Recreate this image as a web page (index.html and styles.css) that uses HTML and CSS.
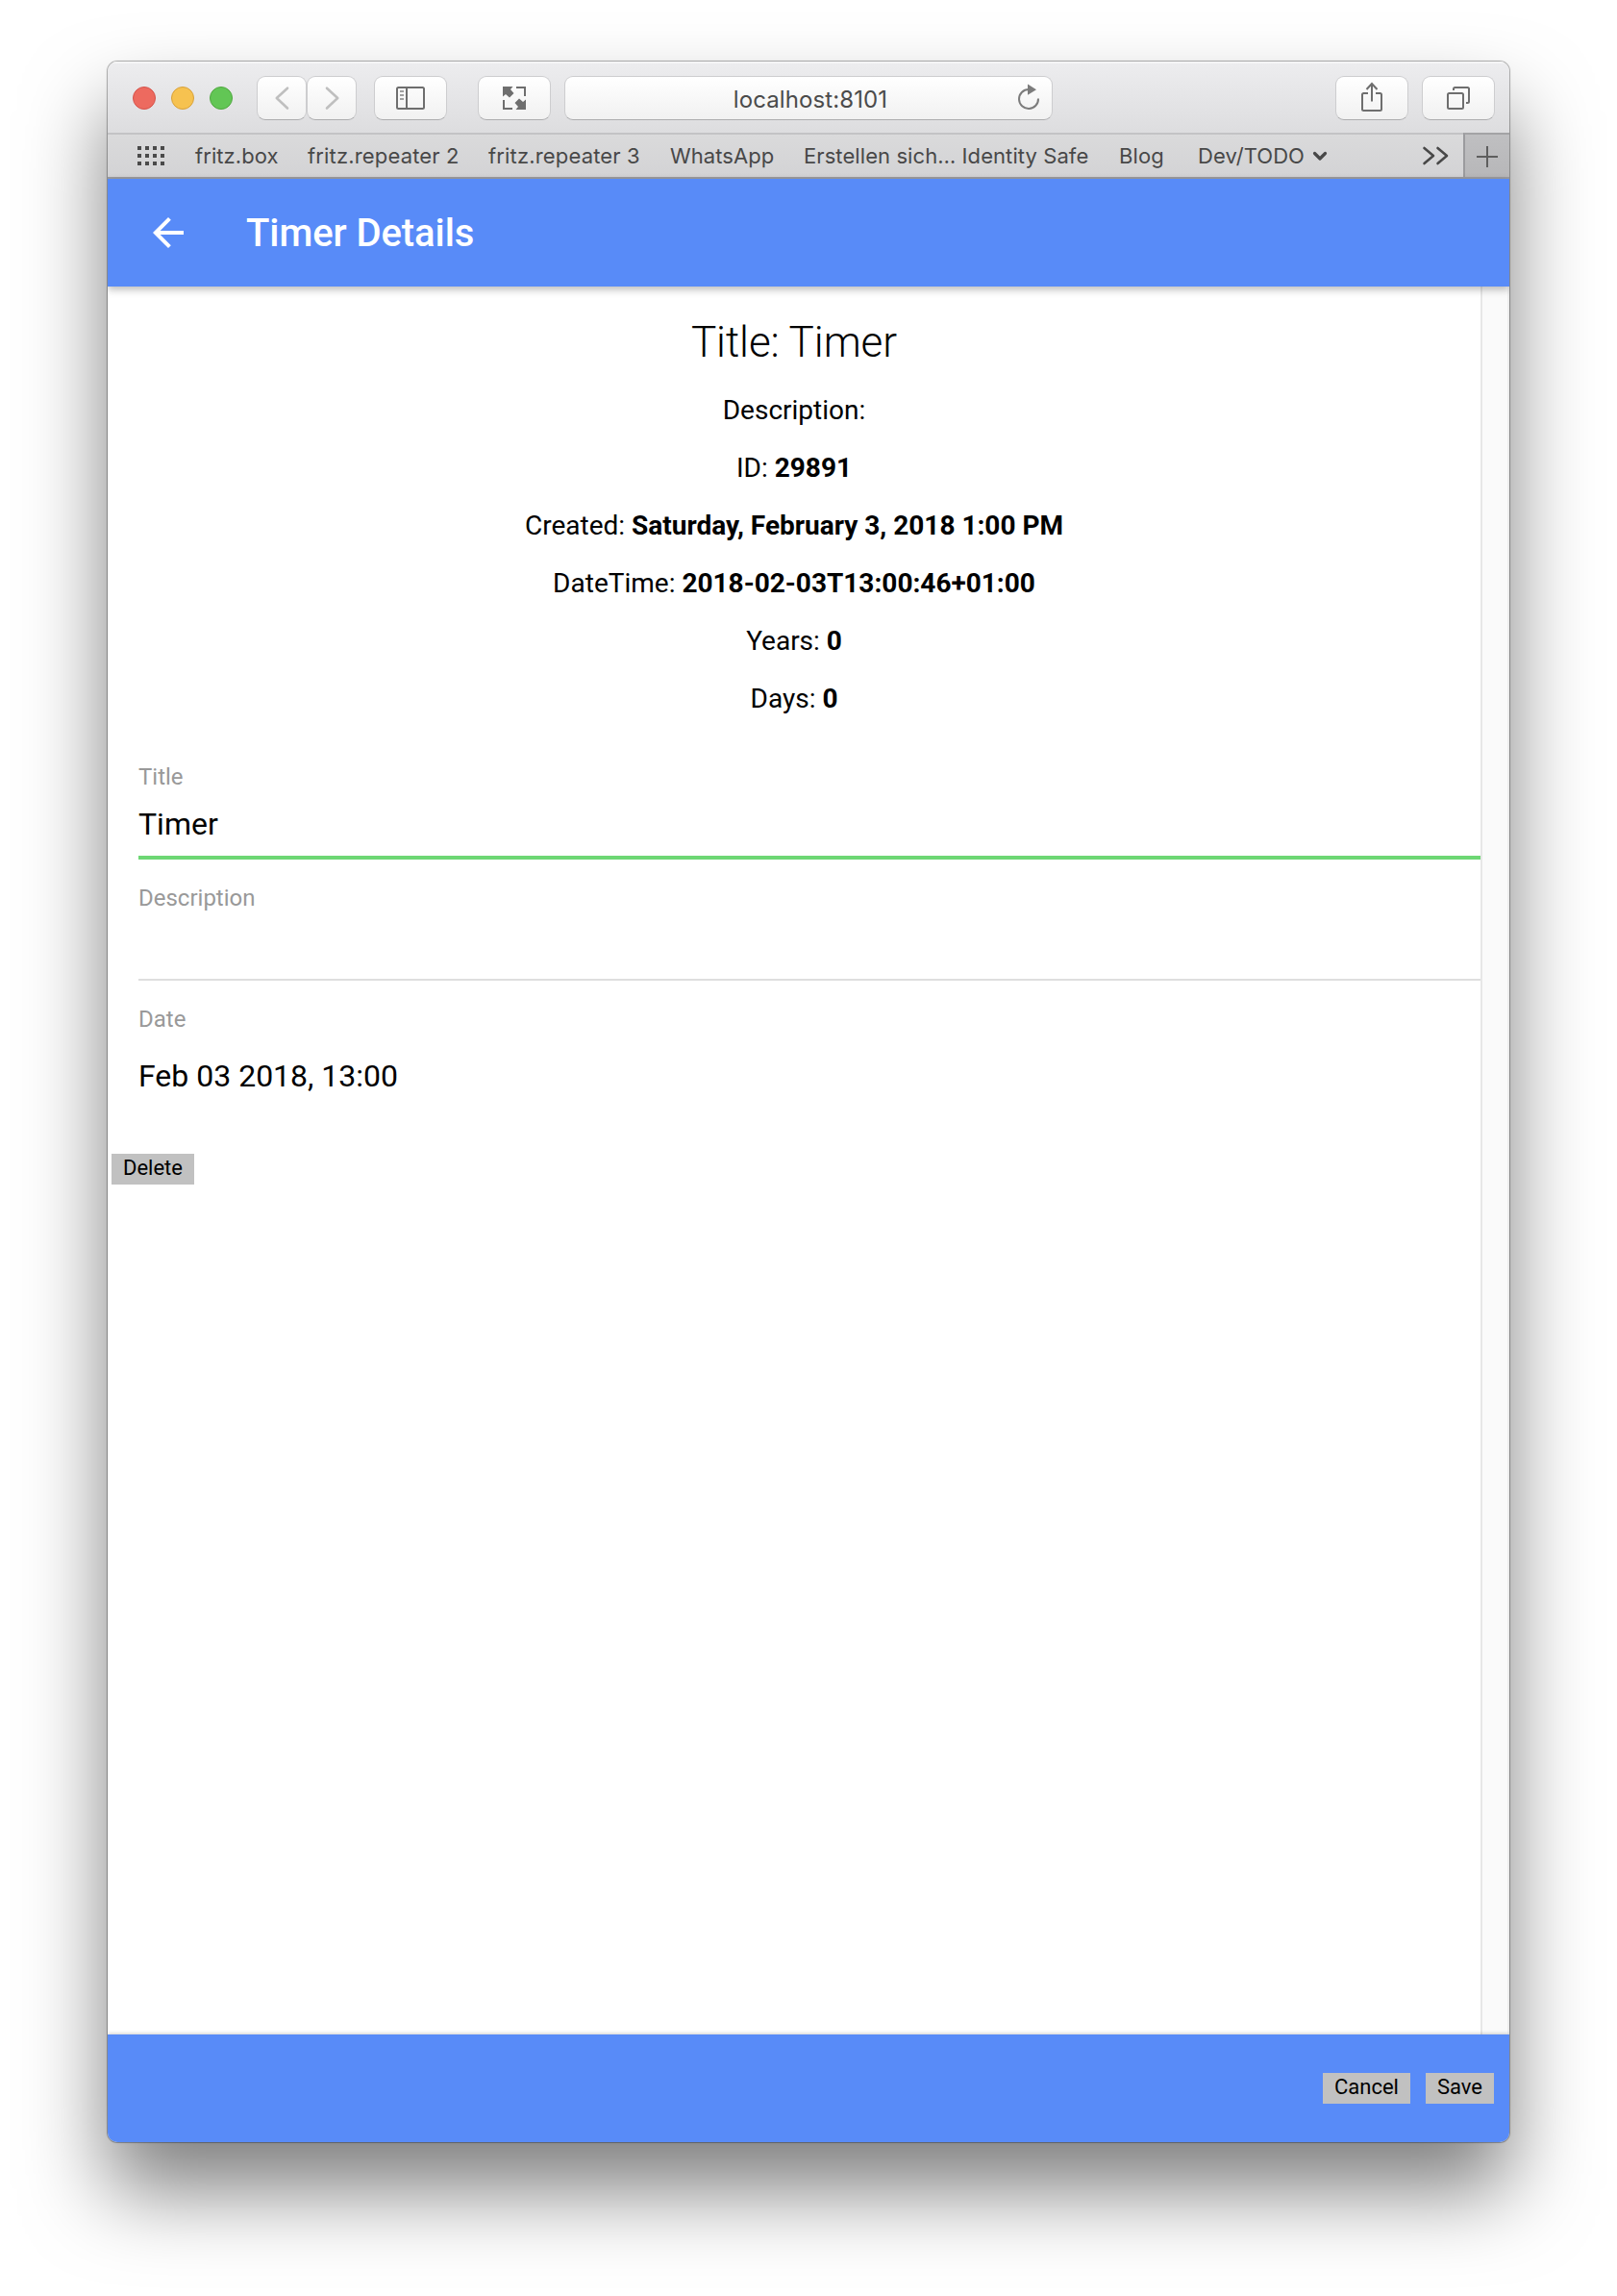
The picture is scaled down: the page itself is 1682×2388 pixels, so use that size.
FILE: index.html
```
<!DOCTYPE html>
<html lang="en">
<head>
<meta charset="utf-8">
<title>Timer Details</title>
<link rel="stylesheet" href="styles.css">
</head>
<body>
<div class="window">
  <div class="toolbar">
    <div class="lights"><span class="light red"></span><span class="light yellow"></span><span class="light green"></span></div>
    <div class="nav">
      <button class="tool narrow"><svg width="50" height="44" viewBox="0 0 50 44"><path d="M31 11.700 19.800 22 31 32.500" fill="none" stroke="#bfbfbf" stroke-width="2.600" stroke-linecap="round" stroke-linejoin="round"/></svg></button>
      <button class="tool narrow"><svg width="50" height="44" viewBox="0 0 50 44"><path d="M20 11.700 31.200 22 20 32.500" fill="none" stroke="#bfbfbf" stroke-width="2.600" stroke-linecap="round" stroke-linejoin="round"/></svg></button>
    </div>
    <button class="tool sidebar"><svg width="30" height="24" viewBox="0 0 30 24" fill="none" stroke="#6e6e6e" stroke-width="2"><rect x="1" y="1" width="28" height="22" rx="1.500"/><path d="M11 1v22"/><path d="M4 5h4M4 9h4M4 13h4" stroke="#a0a0a0"/></svg></button>
    <button class="tool expand"><svg width="24" height="24" viewBox="0 0 24 24"><path d="M0 0h10.500L8 3l3.500 4L7 11.500 3 8 0 10.500zM24 24H13.500l2.500-3-3.500-4 4.500-4.500 4 3.500 3-2.500z" fill="#6e6e6e"/><path d="M14 1h9v9M1 14v9h9" fill="none" stroke="#6e6e6e" stroke-width="2"/></svg></button>
    <div class="address"><span>localhost:8101</span>
      <svg class="reload" width="24" height="28" viewBox="0 0 24 28"><path d="M22 15.500A10 10 0 1 1 12 6" fill="none" stroke="#7c7c7c" stroke-width="2"/><path d="M11 .5v11.300L20 6.200z" fill="#7c7c7c"/></svg>
    </div>
    <button class="tool share"><svg width="24" height="32" viewBox="0 0 24 32" fill="none" stroke="#6e6e6e" stroke-width="2"><path d="M8 12H3.500Q2 12 2 13.500v15Q2 30 3.500 30h17q1.500 0 1.500-1.500v-15Q22 12 20.500 12H16"/><path d="M12 2v18.500M6.500 8 12 2l5.500 6"/></svg></button>
    <button class="tool tabs"><svg width="24" height="24" viewBox="0 0 24 24" fill="none" stroke="#6e6e6e" stroke-width="2"><rect x="1" y="7" width="16" height="16" rx="1.500"/><path d="M7 4V2.500Q7 1 8.500 1h13Q23 1 23 2.500v13q0 1.500-1.500 1.500H20"/></svg></button>
  </div>
  <div class="favorites">
    <svg class="grid" width="28" height="20" viewBox="0 0 28 20"><path d="M2 0v20M10 0v20M18 0v20M26 0v20" stroke="#4a4a4a" stroke-width="4" stroke-dasharray="4 4"/></svg>
    <span class="fav box">fritz.box</span>
    <span class="fav repeater-a">fritz.repeater 2</span>
    <span class="fav repeater-b">fritz.repeater 3</span>
    <span class="fav whatsapp">WhatsApp</span>
    <span class="fav identity">Erstellen sich… Identity Safe</span>
    <span class="fav blog">Blog</span>
    <span class="fav dev">Dev/TODO</span>
    <svg width="16" height="12" viewBox="0 0 16 12"><path d="M2.500 3.500 8 9l5.500-5.500" fill="none" stroke="#484848" stroke-width="3.200" stroke-linecap="round" stroke-linejoin="round"/></svg>
    <svg class="more" width="28" height="20" viewBox="0 0 28 20"><path d="M2.500 2 12 10l-9.500 8M16.500 2 26 10l-9.500 8" fill="none" stroke="#484848" stroke-width="2.600" stroke-linecap="round" stroke-linejoin="round"/></svg>
    <div class="new-tab"><svg width="22" height="22" viewBox="0 0 22 22"><path d="M11 0v22M0 11h22" stroke="#5e5e5e" stroke-width="2"/></svg></div>
  </div>
  <header class="app-header">
    <svg width="48" height="48" viewBox="0 0 24 24"><path d="M20 11H7.830l5.590-5.590L12 4l-8 8 8 8 1.410-1.410L7.830 13H20z" fill="#fff"/></svg>
    <span>Timer Details</span>
  </header>
  <div class="content">
    <main class="page">
      <div class="details">
        <h1>Title: Timer</h1>
        <p>Description:</p>
        <p>ID: <b>29891</b></p>
        <p>Created: <b>Saturday, February 3, 2018 1:00 PM</b></p>
        <p>DateTime: <b>2018-02-03T13:00:46+01:00</b></p>
        <p>Years: <b>0</b></p>
        <p>Days: <b>0</b></p>
      </div>
      <div class="field valid"><label>Title</label><div class="value">Timer</div></div>
      <div class="field"><label>Description</label><div class="value"></div></div>
      <div class="field date"><label>Date</label><div class="value">Feb 03 2018, 13:00</div></div>
      <button class="action delete">Delete</button>
    </main>
    <div class="scrollbar"></div>
  </div>
  <footer class="app-footer">
    <button class="action">Cancel</button>
    <button class="action">Save</button>
  </footer>
</div>
</body>
</html>
```
FILE: styles.css
```
* { box-sizing: border-box; }
body {
  margin: 0;
  height: 2388px;
  padding: 64px 112px;
  overflow: hidden;
  background: #fff;
  font-family: Roboto, "Liberation Sans", sans-serif;
  color: #000;
}
svg { display: block; flex: none; }
button { margin: 0; padding: 0; border: 0; font-family: inherit; color: inherit; }
.window {
  width: 1458px;
  height: 2164px;
  display: flex;
  flex-direction: column;
  overflow: hidden;
  border-radius: 10px;
  background: #fff;
  box-shadow: 0 0 0 1px rgba(0, 0, 0, .25), 0 0 3px rgba(0, 0, 0, .15), 0 50px 85px rgba(0, 0, 0, .5);
}

/* Browser toolbar */
.toolbar {
  height: 76px;
  flex: none;
  display: flex;
  align-items: center;
  padding: 0 15px 0 26px;
  border-bottom: 2px solid #c3c3c5;
  background: linear-gradient(#ededef, #dddddf);
  box-shadow: inset 0 2px #f5f5f6;
}
.lights { display: flex; gap: 16px; margin-top: 2px; }
.light { width: 24px; height: 24px; border-radius: 50%; border: 1px solid; }
.red { background: #ed6a5f; border-color: #d5524a; }
.yellow { background: #f6c250; border-color: #d8a13a; }
.green { background: #62c655; border-color: #4fa73f; }
.nav { display: flex; margin-left: 25px; }
.tool, .address {
  display: flex;
  align-items: center;
  justify-content: center;
  flex: none;
  width: 76px;
  height: 46px;
  margin-top: 2px;
  border: 1px solid #cdcdcf;
  border-bottom-color: #acacae;
  border-radius: 9px;
  background: linear-gradient(#fff, #f1f1f1);
}
.narrow { width: 52px; }
.sidebar { margin-left: 18px; }
.expand { margin-left: 32px; }
.address {
  position: relative;
  width: 508px;
  margin-left: 14px;
  padding: 2px 0 0 4px;
  font: 24px Inter, "Liberation Sans", sans-serif;
  letter-spacing: .1px;
  color: #4b4b4b;
}
.reload { position: absolute; right: 12px; top: 7px; }
.share { margin-left: auto; padding-bottom: 2px; }
.tabs { margin-left: 14px; }

/* Favorites bar */
.favorites {
  height: 46px;
  flex: none;
  display: flex;
  align-items: center;
  padding-left: 31px;
  border-bottom: 2px solid #9c9c9f;
  background: linear-gradient(#dadadb, #d3d3d5);
  font: 22px Inter, "Liberation Sans", sans-serif;
  letter-spacing: .08px;
  color: #484848;
}
.grid { margin-right: 32px; }
.fav { flex: none; white-space: nowrap; }
.box { width: 117px; }
.repeater-a { width: 188px; }
.repeater-b { width: 189px; }
.repeater-a, .repeater-b { letter-spacing: .16px; }
.whatsapp { width: 139px; }
.identity { width: 328px; }
.blog { width: 82px; }
.dev { width: 119px; }
.more { margin: 0 15px 0 auto; }
.new-tab {
  width: 48px;
  height: 46px;
  margin-top: -2px;
  display: flex;
  align-items: center;
  justify-content: center;
  padding-top: 2px;
  border-left: 2px solid #9b9b9e;
  border-top: 2px solid #a3a3a5;
  background: linear-gradient(#bfbfc1, #b7b7b9);
}

/* App */
.app-header {
  position: relative;
  z-index: 1;
  height: 112px;
  flex: none;
  display: flex;
  align-items: center;
  padding-left: 39px;
  background: #588bf8;
  color: #fff;
  font-size: 40px;
  font-weight: 500;
  letter-spacing: -.08px;
  box-shadow: 0 3px 8px rgba(0, 0, 0, .28);
}
.app-header span { margin-left: 57px; }
.content { flex: 1; display: flex; min-height: 0; }
.page { width: 1428px; background: #fff; }
.scrollbar {
  flex: 1;
  border-left: 2px solid #e7e7e7;
  border-right: 2px solid #eee;
  background: #fafafa;
}
.details { padding-top: 28px; text-align: center; }
.details h1 { margin: 0 0 11px; font-size: 44px; font-weight: 300; line-height: 60px; letter-spacing: -.05px; }
.details p { margin: 0; font-size: 28px; line-height: 60px; }
.field {
  height: 126px;
  margin-left: 32px;
  padding-top: 24px;
  border-bottom: 2px solid #dedede;
}
.field label { display: block; font-size: 24px; line-height: 32px; color: #999; }
.field .value { margin-top: 13px; font-size: 32px; line-height: 40px; }
.field.valid { height: 126px; margin-top: 11px; border-bottom: 4px solid #6dd774; }
.field.date { height: 180px; border: 0; }
.field.date .value { margin-top: 23px; }
.action {
  display: block;
  height: 32px;
  padding: 1px 12px 3px;
  background: #c1c1c1;
  font-size: 22px;
  line-height: 28px;
}
.delete { margin-left: 4px; }
.app-footer {
  position: relative;
  z-index: 1;
  height: 112px;
  flex: none;
  display: flex;
  align-items: center;
  justify-content: flex-end;
  gap: 16px;
  padding-right: 16px;
  background: #588bf8;
  box-shadow: 0 -1px 4px rgba(0, 0, 0, .2);
}
```
